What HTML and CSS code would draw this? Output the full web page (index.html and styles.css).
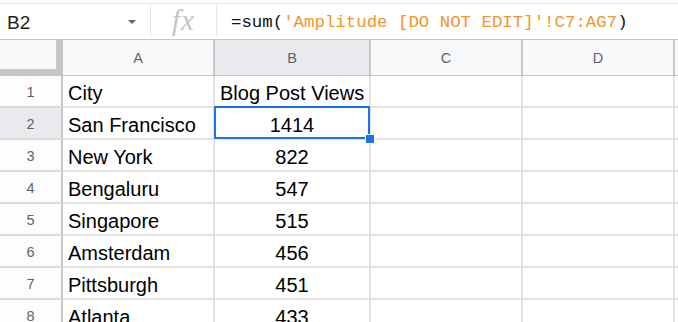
FILE: index.html
```html
<!DOCTYPE html>
<html>
<head>
<meta charset="utf-8">
<link rel="stylesheet" href="styles.css">
</head>
<body>
<div class="fbar">
  <div class="namebox"><span class="ref">B2</span><span class="caret"></span></div>
  <div class="sep"></div>
  <div class="fx">fx</div>
  <div class="sep"></div>
  <div class="formula">=sum(<span class="str">'Amplitude [DO NOT EDIT]'</span><span class="str">!C7:AG7</span>)</div>
</div>
<div class="sheet">
  <div class="corner"></div>
  <div class="ch">A</div>
  <div class="ch sel">B</div>
  <div class="ch">C</div>
  <div class="ch">D</div>
  <div class="ch last"></div>

  <div class="rh">1</div><div class="c">City</div><div class="c">Blog Post Views</div><div class="c"></div><div class="c"></div><div class="c"></div>
  <div class="rh sel">2</div><div class="c">San Francisco</div><div class="c num active">1414<span class="selbox"></span><span class="handle"></span></div><div class="c"></div><div class="c"></div><div class="c"></div>
  <div class="rh">3</div><div class="c">New York</div><div class="c num">822</div><div class="c"></div><div class="c"></div><div class="c"></div>
  <div class="rh">4</div><div class="c">Bengaluru</div><div class="c num">547</div><div class="c"></div><div class="c"></div><div class="c"></div>
  <div class="rh">5</div><div class="c">Singapore</div><div class="c num">515</div><div class="c"></div><div class="c"></div><div class="c"></div>
  <div class="rh">6</div><div class="c">Amsterdam</div><div class="c num">456</div><div class="c"></div><div class="c"></div><div class="c"></div>
  <div class="rh">7</div><div class="c">Pittsburgh</div><div class="c num">451</div><div class="c"></div><div class="c"></div><div class="c"></div>
  <div class="rh">8</div><div class="c">Atlanta</div><div class="c num">433</div><div class="c"></div><div class="c"></div><div class="c"></div>
</div>
</body>
</html>
```
FILE: styles.css
```css
* { box-sizing: border-box; }
html, body { margin: 0; padding: 0; background: #fff; overflow: hidden; }
body { width: 678px; height: 322px; font-family: "Liberation Sans", Arial, sans-serif; }

.fbar {
  margin-top: 3px;
  height: 37px;
  border-top: 1px solid #e3e3e3;
  border-bottom: 1px solid #c4c7c5;
  display: flex;
  align-items: center;
}
.namebox {
  width: 150px;
  display: flex;
  align-items: center;
  padding-left: 7px;
  height: 100%;
}
.ref { font-size: 19px; color: #1f1f1f; flex: 1; line-height: 1; padding-top: 2px; }
.caret {
  width: 0; height: 0;
  border-left: 4px solid transparent;
  border-right: 4px solid transparent;
  border-top: 4.5px solid #666;
  margin-right: 14px;
  margin-top: 1px;
}
.sep { width: 1px; height: 31px; background: #e3e3e3; align-self: flex-start; margin-top: 1px; }
.fx {
  width: 65px;
  text-align: center;
  font-family: "Liberation Serif", "DejaVu Serif", serif;
  font-style: italic;
  font-size: 29px;
  letter-spacing: 1px;
  color: #c4c4c4;
  line-height: 1;
  padding-bottom: 2px;
}
.formula {
  padding-left: 14px;
  font-family: "Liberation Mono", "DejaVu Sans Mono", monospace;
  font-size: 17.4px;
  color: #111;
  white-space: nowrap;
  padding-top: 1px;
}
.str { color: #f0962a; }

.sheet {
  display: grid;
  grid-template-columns: 63px 152px 156px 152px 152px 1fr;
  grid-template-rows: 36px repeat(8, 32px);
}
.corner {
  background: #f8f9fa;
  border-right: 7px solid #c6c6c6;
  border-bottom: 7px solid #c6c6c6;
}
.ch {
  background: #f8f9fa;
  border-right: 2px solid #c7c7c7;
  border-bottom: 1px solid #c4c4c4;
  color: #5f6368;
  font-size: 14.5px;
  display: flex;
  align-items: center;
  justify-content: center;
  padding-top: 1px;
}
.ch.sel { background: #e8eaed; }
.ch.last { border-right: none; }
.rh {
  background: #fdfdfd;
  border-right: 2px solid #c7c7c7;
  border-bottom: 2px solid #dcdcdc;
  color: #5f6368;
  font-size: 14.5px;
  text-align: center;
  line-height: 30px;
  padding-top: 1px;
}
.rh.sel { background: #e8eaed; }
.c {
  border-right: 2px solid #e2e2e3;
  border-bottom: 2px solid #e2e2e3;
  font-size: 20px;
  color: #000;
  padding: 3px 0 0 5px;
  line-height: 28px;
  white-space: nowrap;
  overflow: visible;
}
.c.num { text-align: center; padding-left: 0; }
.active { position: relative; }
.selbox {
  position: absolute;
  left: -1px; top: -2px; right: -1px; bottom: -1px;
  border: 2px solid #1a73e8;
}
.handle {
  position: absolute;
  width: 8px; height: 8px;
  right: -5px; bottom: -5px;
  background: #1a73e8;
  border: 1px solid #fff;
  box-sizing: content-box;
  margin: -1px;
}
```
